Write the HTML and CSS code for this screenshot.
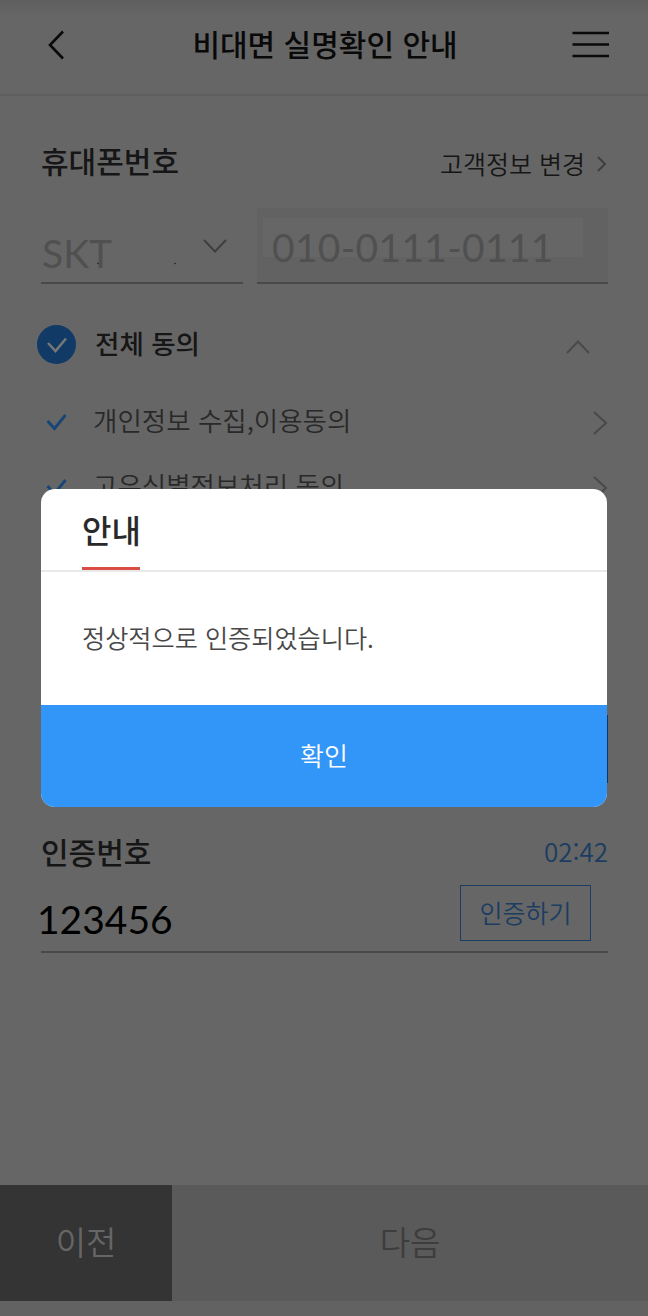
FILE: index.html
```html
<!DOCTYPE html>
<html lang="ko">
<head>
<meta charset="utf-8">
<title>비대면 실명확인 안내</title>
<link rel="stylesheet" href="styles.css">
</head>
<body>
<div class="screen">
  <header class="header">
    <svg class="back" width="20" height="32" viewBox="0 0 20 32"><path d="M17 2.500 4 16 17 29.500"/></svg>
    <h1 class="header-title">비대면 실명확인 안내</h1>
    <svg class="menu" width="38" height="28" viewBox="0 0 38 28"><path d="M.5 2h36.500M.5 13.500h36.500M.5 25h36.500"/></svg>
  </header>

  <main class="content">
    <div class="row phone-head">
      <h2 class="label">휴대폰번호</h2>
      <a class="change"><span>고객정보 변경</span><svg width="12" height="18" viewBox="0 0 12 18"><path d="M2 2l7 7-7 7"/></svg></a>
    </div>
    <div class="row fields">
      <div class="carrier">
        <span class="carrier-name">SKT</span>
        <svg class="specks" width="82" height="4" viewBox="0 0 82 4"><path d="M1 1l2 1M78 2l2-1"/></svg>
        <svg class="carrier-arrow" width="26" height="16" viewBox="0 0 26 16"><path d="M2 2l11 11.500L24 2"/></svg>
      </div>
      <div class="phone"><span class="phone-value">010-0111-0111</span></div>
    </div>

    <div class="agree-all">
      <svg width="39" height="39" viewBox="0 0 39 39"><circle cx="19.500" cy="19.500" r="19.500"/><path d="M11 18l7.500 8L29 13.500"/></svg>
      <span class="agree-title">전체 동의</span>
      <svg class="fold" width="26" height="16" viewBox="0 0 26 16"><path d="M2 14 13 2.500 24 14"/></svg>
    </div>
    <ul class="terms">
      <li class="term">
        <svg class="check" width="21" height="18" viewBox="0 0 21 18"><path d="M1.500 8l7 7.500L19.500 2"/></svg>
        <span class="term-name">개인정보 수집,이용동의</span>
        <svg class="go" width="16" height="26" viewBox="0 0 16 26"><path d="M2 2l12 11L2 24"/></svg>
      </li>
      <li class="term">
        <svg class="check" width="21" height="18" viewBox="0 0 21 18"><path d="M1.500 8l7 7.500L19.500 2"/></svg>
        <span class="term-name">고유식별정보처리 동의</span>
        <svg class="go" width="16" height="26" viewBox="0 0 16 26"><path d="M2 2l12 11L2 24"/></svg>
      </li>
    </ul>
    <div class="request"></div>

    <div class="row code-head">
      <h2 class="label">인증번호</h2>
      <span class="timer">02:42</span>
    </div>
    <div class="row code">
      <span class="code-value">123456</span>
      <button class="verify">인증하기</button>
    </div>
  </main>

  <footer class="footer">
    <button class="prev">이전</button>
    <button class="next">다음</button>
  </footer>

  <section class="dialog">
    <div class="dialog-head"><h2 class="dialog-title">안내</h2></div>
    <p class="dialog-text">정상적으로 인증되었습니다.</p>
    <button class="confirm">확인</button>
  </section>
</div>
</body>
</html>
```

FILE: styles.css
```css
* { box-sizing: border-box; }
body { margin: 0; }
h1, h2, p, ul { margin: 0; padding: 0; }
ul { list-style: none; }
svg { display: block; flex: none; fill: none; stroke: #3f3f3f; stroke-width: 2; }
button { border: 0; padding: 0; font: inherit; }

.screen {
  position: relative;
  display: flex;
  flex-direction: column;
  width: 648px;
  height: 1316px;
  overflow: hidden;
  background: #666;
  color: #161616;
  font-family: "Noto Sans CJK KR", sans-serif;
  font-weight: 350;
  line-height: 1;
  white-space: nowrap;
}

.header {
  display: flex;
  align-items: center;
  justify-content: space-between;
  height: 96px;
  padding: 0 38px 5px 46px;
  border-bottom: 2px solid #5e5e5e;
  background: linear-gradient(#5e5e5e, #666 16px);
}
.header-title { margin-left: 12px; padding-bottom: 3px; font-size: 30px; font-weight: 500; color: #090909; }
.back, .menu { stroke: #090909; stroke-width: 2.6; }

.content { flex: 1; padding: 0 40px 0 41px; }
.row { display: flex; justify-content: space-between; }
.label { font-size: 30px; font-weight: 500; }

.phone-head { height: 112px; padding-top: 49px; }
.change { display: flex; align-items: center; gap: 11px; height: 38px; font-size: 25px; }
.change span { padding-bottom: 2px; }

.fields { height: 76px; }
.carrier, .phone { border-bottom: 2px solid #494949; font: 39px/1 Lato, sans-serif; color: #505050; }
.carrier { display: flex; width: 202px; padding-top: 26px; }
.carrier-name { width: 54px; margin-left: 1px; }
.specks { margin-top: 28px; stroke: #222; stroke-width: 1; }
.carrier-arrow { margin: 4px 0 0 24px; }
.phone { width: 351px; padding: 10px 0 0 6px; background: #626262; }
.phone-value { display: block; width: 320px; height: 39px; padding: 10px 0 0 9px; background: #666; letter-spacing: .3px; }

.agree-all { display: flex; align-items: center; height: 39px; margin: 41px 17px 0 -4px; }
.agree-all circle { fill: #113a67; stroke: none; }
.agree-all path { stroke: #777; stroke-width: 2.5; }
.agree-title { margin-left: 19px; padding-bottom: 2px; font-size: 26.5px; font-weight: 500; }
.fold { margin: 4px 0 0 auto; }
.agree-all .fold path { stroke: #4a4a4a; stroke-width: 2; }

.terms { margin-top: 25px; }
.term { display: flex; align-items: center; height: 65px; font-size: 26.5px; color: #292929; }
.term-name { padding-bottom: 2px; }
.check { margin: 0 26px 0 5px; stroke: #174576; stroke-width: 2.8; }
.go { margin: 3px 0 0 auto; stroke: #494949; }

.request { height: 68px; margin-top: 196px; border-right: 1px solid #123763; }

.code-head { align-items: center; height: 68px; margin-top: 34px; }
.timer { font-size: 26px; color: #1b3d62; }
.code { height: 68px; border-bottom: 2px solid #494949; }
.code-value { margin: 15px 0 0 -4px; font: 39px/1 Lato, sans-serif; color: #000; }
.verify { width: 131px; height: 56px; margin-right: 17px; padding-bottom: 2px; border: 1px solid #1b3d62; background: none; color: #1b3d62; font-size: 25px; line-height: 1; }

.footer { display: flex; height: 131px; border-bottom: 15px solid #626262; font-size: 33px; }
.footer button { padding-bottom: 3px; }
.prev { width: 172px; background: #343434; color: #666; }
.next { flex: 1; background: #5a5a5a; color: #3d3d3d; }

.dialog { position: absolute; left: 41px; top: 489px; width: 566px; height: 318px; border-radius: 14px; overflow: hidden; background: #fff; }
.dialog-head { height: 83px; padding-left: 41px; border-bottom: 2px solid #e9e9e9; }
.dialog-title { width: 58px; height: 81px; padding-top: 24px; border-bottom: 3px solid #db4c43; color: #292929; font-size: 32px; font-weight: 500; }
.dialog-text { height: 133px; padding: 53px 41px 0; color: #484848; font-size: 25.2px; }
.confirm { width: 100%; height: 102px; padding-bottom: 2px; background: #3196f8; color: #fff; font-size: 26px; }
```
